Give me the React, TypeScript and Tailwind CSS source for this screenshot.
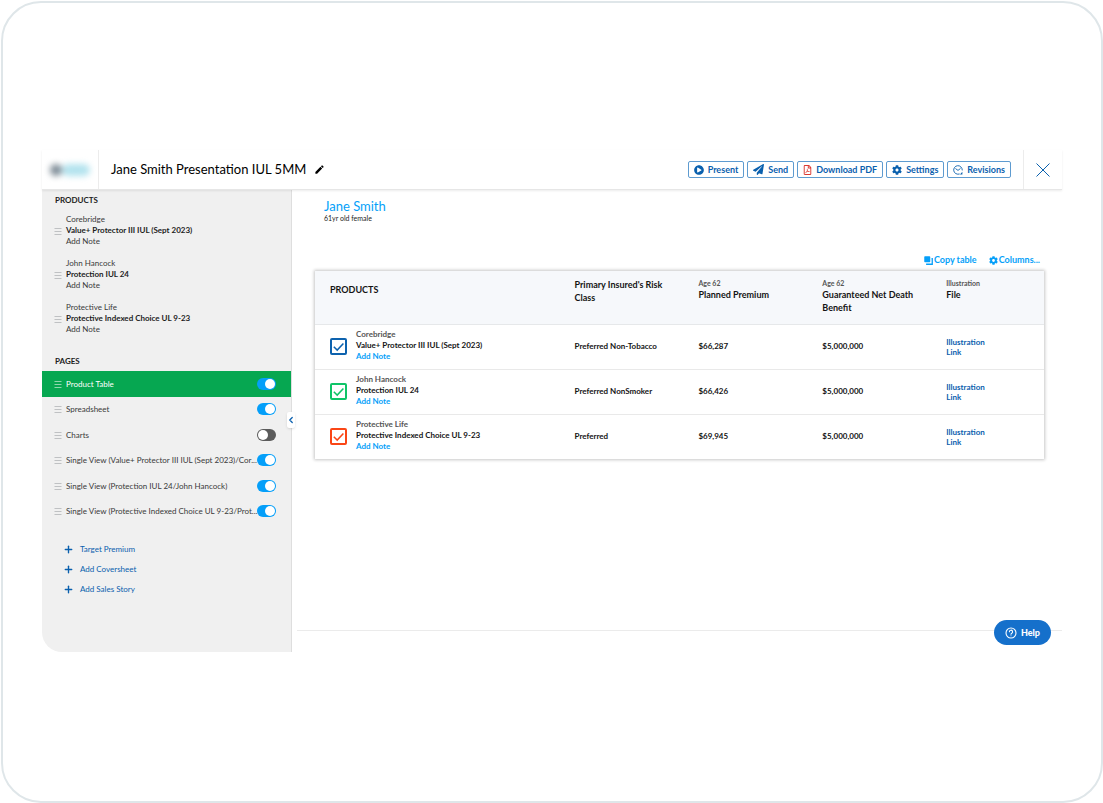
import { useState } from 'react'
import type { ReactNode } from 'react'
import { ChevronLeft, Plus } from 'lucide-react'
import { FaCog, FaPaperPlane, FaPlayCircle, FaRegFilePdf } from 'react-icons/fa'
import { MdEdit } from 'react-icons/md'

interface Product {
    id: string
    carrier: string
    name: string
    riskClass: string
    premium: string
    deathBenefit: string
    checkboxClass: string
}

const PRODUCTS: Product[] = [
    {
        id: 'corebridge',
        carrier: 'Corebridge',
        name: 'Value+ Protector III IUL (Sept 2023)',
        riskClass: 'Preferred Non-Tobacco',
        premium: '$66,287',
        deathBenefit: '$5,000,000',
        checkboxClass: 'border-[#0d62ae] text-[#0d62ae]',
    },
    {
        id: 'john-hancock',
        carrier: 'John Hancock',
        name: 'Protection IUL 24',
        riskClass: 'Preferred NonSmoker',
        premium: '$66,426',
        deathBenefit: '$5,000,000',
        checkboxClass: 'border-[#0fc468] text-[#0fc468]',
    },
    {
        id: 'protective',
        carrier: 'Protective Life',
        name: 'Protective Indexed Choice UL 9-23',
        riskClass: 'Preferred',
        premium: '$69,945',
        deathBenefit: '$5,000,000',
        checkboxClass: 'border-[#fa4616] text-[#fa4616]',
    },
]

const PAGES = [
    { label: 'Product Table', on: true },
    { label: 'Spreadsheet', on: true },
    { label: 'Charts', on: false },
    { label: 'Single View (Value+ Protector III IUL (Sept 2023)/Cor...', on: true },
    { label: 'Single View (Protection IUL 24/John Hancock)', on: true },
    { label: 'Single View (Protective Indexed Choice UL 9-23/Prot...', on: true },
]

const EXTRA_LINKS = ['Target Premium', 'Add Coversheet', 'Add Sales Story']

function DragHandle({ className = 'text-[#bfc1c3]' }: { className?: string }) {
    return (
        <svg width="8" height="8" viewBox="0 0 8 8" className={`shrink-0 ${className}`} aria-hidden="true">
            <path d="M0.5 1.5H7.5M0.5 4.5H7.5M0.5 7.5H7.5" stroke="currentColor" strokeWidth="1" />
        </svg>
    )
}

function CopyIcon() {
    return (
        <svg width="9" height="9" viewBox="0 0 18 18" aria-hidden="true">
            <rect x="0.5" y="0.5" width="12" height="12" rx="1.5" fill="currentColor" />
            <path d="M15 5.5h1.5v11h-11V15" fill="none" stroke="currentColor" strokeWidth="2.6" />
        </svg>
    )
}

function RevisionsIcon() {
    return (
        <svg width="10" height="10" viewBox="0 0 20 20" fill="none" stroke="currentColor" strokeWidth="1.8" aria-hidden="true">
            <path d="M12.5 18.2A8.6 8.6 0 1 1 18.6 10" strokeLinecap="round" />
            <path d="M5.5 7.5l4.5 3.3 4.3-3.3" strokeLinecap="round" strokeLinejoin="round" />
            <path d="M18.8 13.5v5.3h-5z" fill="currentColor" stroke="none" />
        </svg>
    )
}

function HelpIcon() {
    return (
        <svg width="12" height="12" viewBox="0 0 24 24" fill="none" stroke="currentColor" strokeWidth="2.2" aria-hidden="true">
            <circle cx="12" cy="12" r="10" />
            <path d="M8.8 9.6a3.2 3.2 0 1 1 4.8 2.7c-1 .6-1.6 1-1.6 2.2" strokeLinecap="round" />
            <circle cx="12" cy="17.6" r="1" fill="currentColor" stroke="none" />
        </svg>
    )
}

function HeaderButton({ icon, children }: { icon: ReactNode; children: ReactNode }) {
    return (
        <button className="flex h-[17px] items-center gap-1 rounded-xs border border-[#5e9bd0] px-[5px] text-[9px] font-bold whitespace-nowrap text-[#0a60ae]">
            {icon}
            {children}
        </button>
    )
}

function Toggle({ label, defaultOn }: { label: string; defaultOn: boolean }) {
    const [on, setOn] = useState(defaultOn)

    return (
        <label className="relative flex h-3 w-[19px] shrink-0">
            <input
                type="checkbox"
                role="switch"
                aria-label={label}
                checked={on}
                onChange={e => setOn(e.target.checked)}
                className="h-3 w-full appearance-none rounded-full bg-[#5b5b5b] checked:bg-[#059ff9]"
            />
            <span className={`pointer-events-none absolute top-px size-[10px] rounded-full bg-white ${on ? 'right-px' : 'left-px'}`} />
        </label>
    )
}

function ProductCheckbox({ label, className }: { label: string; className: string }) {
    return (
        <label className={`relative flex size-[17px] shrink-0 ${className}`}>
            <input
                type="checkbox"
                aria-label={label}
                defaultChecked
                className="peer size-full appearance-none rounded-xs border-2 border-current"
            />
            <svg viewBox="0 0 17 17" className="pointer-events-none absolute inset-0 hidden peer-checked:block" fill="none" aria-hidden="true">
                <path d="M3.8 8.8l3.4 3.3 6.2-6.6" stroke="currentColor" strokeWidth="1.5" />
            </svg>
        </label>
    )
}

function Header() {
    return (
        <header className="relative z-10 flex h-10 items-stretch border-b border-[#e6e6e6] bg-white shadow-[0_1px_2px_rgba(0,0,0,0.08)]">
            <div className="flex w-[57px] items-center border-r border-[#ececec] pl-2">
                <div className="flex items-center blur-[3px]" aria-hidden="true">
                    <span className="h-3 w-3 rounded-full bg-[#7d8b96]" />
                    <span className="h-3 w-[28px] rounded-full bg-[#b3e3ee]" />
                </div>
            </div>
            <div className="flex flex-1 items-center gap-2 pl-3">
                <h1 className="text-[13px] whitespace-nowrap text-black">Jane Smith Presentation IUL 5MM</h1>
                <button aria-label="Edit title" className="text-black">
                    <MdEdit size={11} />
                </button>
            </div>
            <div className="flex items-center gap-[3px] pr-3">
                <HeaderButton icon={<FaPlayCircle size={10} />}>Present</HeaderButton>
                <HeaderButton icon={<FaPaperPlane size={11} />}>Send</HeaderButton>
                <HeaderButton icon={<FaRegFilePdf size={10} className="w-[9px] text-[#dc3a32]" />}>Download PDF</HeaderButton>
                <HeaderButton icon={<FaCog size={10} />}>Settings</HeaderButton>
                <HeaderButton icon={<RevisionsIcon />}>Revisions</HeaderButton>
            </div>
            <div className="flex w-[39px] items-center justify-center border-l border-[#ececec]">
                <button aria-label="Close" className="text-[#0a60ae]">
                    <svg width="14" height="14" viewBox="0 0 14 14" aria-hidden="true">
                        <path d="M0.5 0.5l13 13M13.5 0.5l-13 13" stroke="currentColor" strokeWidth="1" />
                    </svg>
                </button>
            </div>
        </header>
    )
}

function Sidebar() {
    return (
        <aside className="relative w-[250px] shrink-0 rounded-bl-[20px] border-r border-[#dedede] bg-[#f0f0f0] pt-1 text-[8px] text-[#3a3a3a]">
            <h2 className="pl-[13px] leading-[12px] font-bold text-[#1d1d1d]">PRODUCTS</h2>
            <ul className="mt-2 flex flex-col gap-[11px]">
                {PRODUCTS.map(p => (
                    <li key={p.id} className="flex items-center gap-1 pl-3 leading-[11px]">
                        <DragHandle />
                        <div>
                            <p>{p.carrier}</p>
                            <p className="font-bold text-[#1d1d1d]">{p.name}</p>
                            <button className="block">Add Note</button>
                        </div>
                    </li>
                ))}
            </ul>

            <h2 className="mt-5 pl-[13px] leading-[12px] font-bold text-[#1d1d1d]">PAGES</h2>
            <ul className="mt-1 grid h-[153px] grid-cols-1 grid-rows-6">
                {PAGES.map((page, i) => (
                    <li
                        key={page.label}
                        className={`flex items-center gap-1 pr-[15px] pl-3 ${i === 0 ? 'bg-[#06a751] text-white' : ''}`}
                    >
                        <DragHandle className={i === 0 ? 'text-[#8fd6ae]' : 'text-[#bfc1c3]'} />
                        <div className="flex min-w-0 flex-1 items-center">
                            <button className="min-w-0 flex-1 text-left whitespace-nowrap">{page.label}</button>
                            <Toggle label={page.label} defaultOn={page.on} />
                        </div>
                    </li>
                ))}
            </ul>

            <ul className="mt-[15px] pl-[21px] text-[#0a60ae]">
                {EXTRA_LINKS.map(link => (
                    <li key={link}>
                        <button className="flex h-5 items-center gap-[6px]">
                            <Plus size={11} strokeWidth={3} />
                            {link}
                        </button>
                    </li>
                ))}
            </ul>

            <button
                aria-label="Collapse sidebar"
                className="absolute top-[222px] -right-1 flex h-4 w-2 items-center justify-center rounded-xs bg-white text-[#0a60ae] shadow-sm"
            >
                <ChevronLeft size={10} strokeWidth={3} className="shrink-0" />
            </button>
        </aside>
    )
}

function ProductTable() {
    return (
        <table className="w-full table-fixed border-collapse bg-white text-left text-[8px] text-[#141414] shadow-[0_0_3px_1px_rgba(0,0,0,0.22)]">
            <colgroup>
                <col className="w-[34.5%]" />
                <col className="w-[17%]" />
                <col className="w-[17%]" />
                <col className="w-[17%]" />
                <col />
            </colgroup>
            <thead className="bg-[#f6f8fb] text-[9px] leading-[13px]">
                <tr className="h-[53px] border-b border-[#e6e8ea] align-top">
                    <th className="pt-3 pl-[15px] font-bold">PRODUCTS</th>
                    <th className="px-2 pt-[7px] font-bold">Primary Insured's Risk Class</th>
                    <th className="px-2 pt-[7px] font-bold">
                        <span className="block text-[7px] leading-[10px] text-[#555]">Age 62</span>
                        Planned Premium
                    </th>
                    <th className="px-2 pt-[7px] font-bold">
                        <span className="block text-[7px] leading-[10px] text-[#555]">Age 62</span>
                        Guaranteed Net Death Benefit
                    </th>
                    <th className="px-2 pt-[7px] font-bold">
                        <span className="block text-[7px] leading-[10px] text-[#555]">Illustration</span>
                        File
                    </th>
                </tr>
            </thead>
            <tbody className="leading-[11px] font-bold">
                {PRODUCTS.map(p => (
                    <tr key={p.id} className="h-[45px] border-b border-[#e9e9e9] last:border-b-0">
                        <td className="pl-[15px]">
                            <div className="flex items-center gap-[9px]">
                                <ProductCheckbox label={p.name} className={p.checkboxClass} />
                                <div className="pb-0.5">
                                    <p className="text-[#555]">{p.carrier}</p>
                                    <p>{p.name}</p>
                                    <button className="block text-[#059ff9]">Add Note</button>
                                </div>
                            </div>
                        </td>
                        <td className="px-2">{p.riskClass}</td>
                        <td className="px-2">{p.premium}</td>
                        <td className="px-2">{p.deathBenefit}</td>
                        <td className="px-2">
                            <a href="#illustration" className="block w-10 leading-[10px] text-[#0a60ae]">
                                Illustration Link
                            </a>
                        </td>
                    </tr>
                ))}
            </tbody>
        </table>
    )
}

export default function App() {
    return (
        <div className="flex min-h-screen bg-white pt-px pl-px font-['Lato',sans-serif]">
            <div className="flex flex-1 flex-col justify-center rounded-[40px] border-2 border-[#dfe6e9] px-[39px] pb-0.5">
                <Header />
                <div className="flex">
                    <Sidebar />
                    <main className="flex min-w-0 flex-1 flex-col pl-[5px]">
                        <div className="flex-1 px-[18px] pb-[171px]">
                            <div className="pt-2 pl-[9px]">
                                <h2 className="text-[13px] leading-[16px] text-[#059ff9]">Jane Smith</h2>
                                <p className="text-[7px] leading-[8px] text-[#1d1d1d]">61yr old female</p>
                            </div>
                            <div className="mt-8 mb-[5px] flex justify-end gap-3 pr-1 text-[9px] leading-[12px] font-bold text-[#059ff9]">
                                <button className="flex items-center gap-px">
                                    <CopyIcon />
                                    Copy table
                                </button>
                                <button className="flex items-center gap-px">
                                    <FaCog size={9} />
                                    Columns...
                                </button>
                            </div>
                            <ProductTable />
                        </div>
                        <footer className="flex h-[22px] justify-end border-t border-[#ebebeb] pr-[11px]">
                            <button className="relative -top-[11px] flex h-[25px] items-center gap-1 rounded-full bg-[#1570cb] px-[11px] text-[9px] font-black text-white">
                                <HelpIcon />
                                Help
                            </button>
                        </footer>
                    </main>
                </div>
            </div>
        </div>
    )
}
